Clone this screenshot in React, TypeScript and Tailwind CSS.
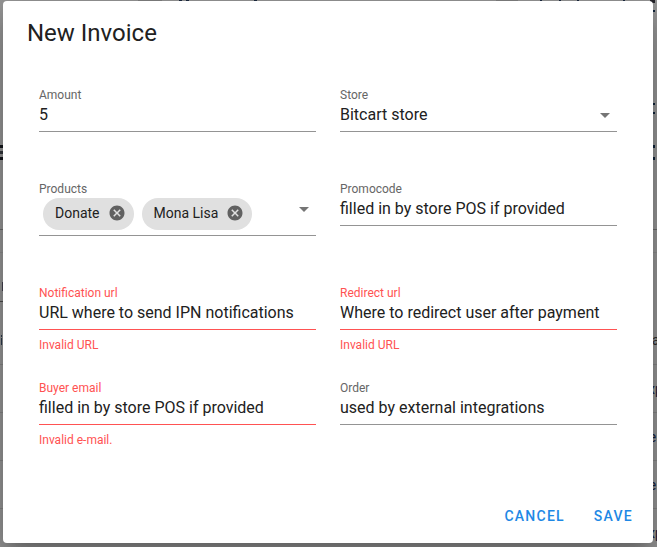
import React from "react";

type FieldProps = {
  label: string;
  value?: string;
  error?: string;
  select?: boolean;
  chips?: string[];
};

function MenuDown() {
  return (
    <svg viewBox="0 0 24 24" className="size-6 shrink-0 fill-[#757575]">
      <path d="M7,10L12,15L17,10H7Z" />
    </svg>
  );
}

function CloseCircle() {
  return (
    <svg viewBox="0 0 24 24" className="size-[18px] shrink-0 fill-[#616161]">
      <path d="M12,2C17.53,2 22,6.47 22,12C22,17.53 17.53,22 12,22C6.47,22 2,17.53 2,12C2,6.47 6.47,2 12,2M15.59,7L12,10.59L8.41,7L7,8.41L10.59,12L7,15.59L8.41,17L12,13.41L15.59,17L17,15.59L13.41,12L17,8.41L15.59,7Z" />
    </svg>
  );
}

function Chip({ text }: { text: string }) {
  return (
    <span className="flex h-8 items-center gap-2 rounded-full bg-[#e0e0e0] pr-2 pb-0.5 pl-3 text-sm whitespace-nowrap">
      {text}
      <CloseCircle />
    </span>
  );
}

function Field({ label, value, error, select, chips }: FieldProps) {
  return (
    <div>
      <div className={error ? "text-xs leading-4 text-[#ff5252]" : "text-xs leading-4 text-[#666666]"}>{label}</div>
      <div className={error ? "border-b border-[#ff5252] pb-1" : "border-b border-[#949494] pb-1"}>
        {chips ? (
          <div className="flex h-[34px] items-start justify-between">
            <div className="flex gap-2 pt-px pl-1">
              {chips.map((c) => (
                <Chip key={c} text={c} />
              ))}
            </div>
            <MenuDown />
          </div>
        ) : (
          <div className="flex h-6 items-center justify-between text-base leading-6">
            <span>{value}</span>
            {select && <MenuDown />}
          </div>
        )}
      </div>
      {error && <div className="mt-[7px] text-xs leading-4 text-[#ff5252]">{error}</div>}
    </div>
  );
}

function TableRow({ text }: { text: string }) {
  return (
    <div className="flex h-12 shrink-0 items-center justify-end border-b border-[#858585]">
      <span className="w-[9px] text-center">{text}</span>
    </div>
  );
}

// The dimmed table page; only thin slivers of it show around the dialog.
function Backdrop() {
  return (
    <div className="absolute inset-0 flex flex-col overflow-hidden text-sm leading-5 text-[#14203a]">
      <div className="flex h-[230px] shrink-0 justify-between border-b border-[#6b6b6b]">
        <div className="flex w-[3px] flex-col gap-[3px] pt-[145px]">
          <span className="h-[3px] bg-[#15171c]" />
          <span className="h-[3px] bg-[#33373c]" />
          <span className="h-[3px] bg-[#15171c]" />
        </div>
        <div className="flex h-px flex-1 pl-[135px]">
          <span className="w-6 bg-[#808080]" />
          <span className="ml-[17px] w-[3px] bg-[#1c2a40]" />
          <span className="ml-1 w-[3px] bg-[#1c2a40]" />
          <span className="ml-[65px] w-[3px] bg-[#1c2a40]" />
          <span className="ml-[239px] w-[22px] bg-[#808080]" />
          <span className="ml-[22px] w-0.5 bg-[#1c2a40]" />
          <span className="ml-[17px] w-0.5 bg-[#1c2a40]" />
          <span className="ml-4 w-0.5 bg-[#1c2a40]" />
          <span className="ml-11 w-0.5 bg-[#1c2a40]" />
        </div>
        <div className="flex w-[7px] flex-col">
          <span className="h-[3px] w-[5px] bg-[#26252a]" />
          <span className="mt-[7px] ml-[3px] h-0.5 w-0.5 bg-[#10233a]" />
          <span className="mt-[91px] ml-[3px] h-0.5 w-0.5 bg-[#10233a]" />
          <span className="mt-[7px] ml-[3px] h-0.5 w-0.5 bg-[#10233a]" />
          <span className="mt-[31px] ml-[3px] h-[3px] w-0.5 bg-[#10233a]" />
          <span className="mt-[9px] ml-[3px] h-[3px] w-0.5 bg-[#10233a]" />
        </div>
      </div>
      <div className="h-[23px] shrink-0 border-b border-[#8c8c8c]" />
      <div className="h-[49px] w-[3px] shrink-0 border-b border-[#4c4c4c] pt-[29px] pl-0.5">
        <div className="h-[9px] w-px bg-[#42404f]" />
      </div>
      <div className="flex h-[63px] shrink-0 justify-between border-b border-[#858585] pl-px">
        <div className="flex w-px flex-col gap-px pt-[33px]">
          <span className="h-0.5 bg-[#2d3b4c]" />
          <span className="h-[7px] bg-[#2d3b4c]" />
        </div>
        <span className="w-[5px] pt-7 text-[#2e2e2e]">a</span>
      </div>
      <TableRow text="xp" />
      <TableRow text="e" />
      <TableRow text="e" />
      <TableRow text="xp" />
    </div>
  );
}

export default function App() {
  return (
    <div className="relative h-[547px] w-[657px] overflow-hidden bg-[#979797] pt-px pl-[3px] font-['Roboto',sans-serif] text-[#212121]">
      <Backdrop />
      <div className="relative flex h-[542px] w-[650px] flex-col rounded bg-white pt-4 shadow-[0_11px_15px_-7px_rgba(0,0,0,0.2),0_24px_38px_3px_rgba(0,0,0,0.14),0_9px_46px_8px_rgba(0,0,0,0.12)]">
        <h1 className="px-6 text-2xl leading-8">New Invoice</h1>
        <div className="mt-[38px] grid grid-cols-[277px_277px] grid-rows-[94px_104px_95px_95px] gap-x-6 px-9">
          <Field label="Amount" value="5" />
          <Field label="Store" value="Bitcart store" select />
          <Field label="Products" chips={["Donate", "Mona Lisa"]} />
          <Field label="Promocode" value="filled in by store POS if provided" />
          <Field label="Notification url" value="URL where to send IPN notifications" error="Invalid URL" />
          <Field label="Redirect url" value="Where to redirect user after payment" error="Invalid URL" />
          <Field label="Buyer email" value="filled in by store POS if provided" error="Invalid e-mail." />
          <Field label="Order" value="used by external integrations" />
        </div>
        <div className="mt-[23px] flex h-9 justify-end gap-[29px] pr-5 text-sm font-medium tracking-[0.0892857em] text-[#1e88e5]">
          <button>CANCEL</button>
          <button>SAVE</button>
        </div>
      </div>
    </div>
  );
}
